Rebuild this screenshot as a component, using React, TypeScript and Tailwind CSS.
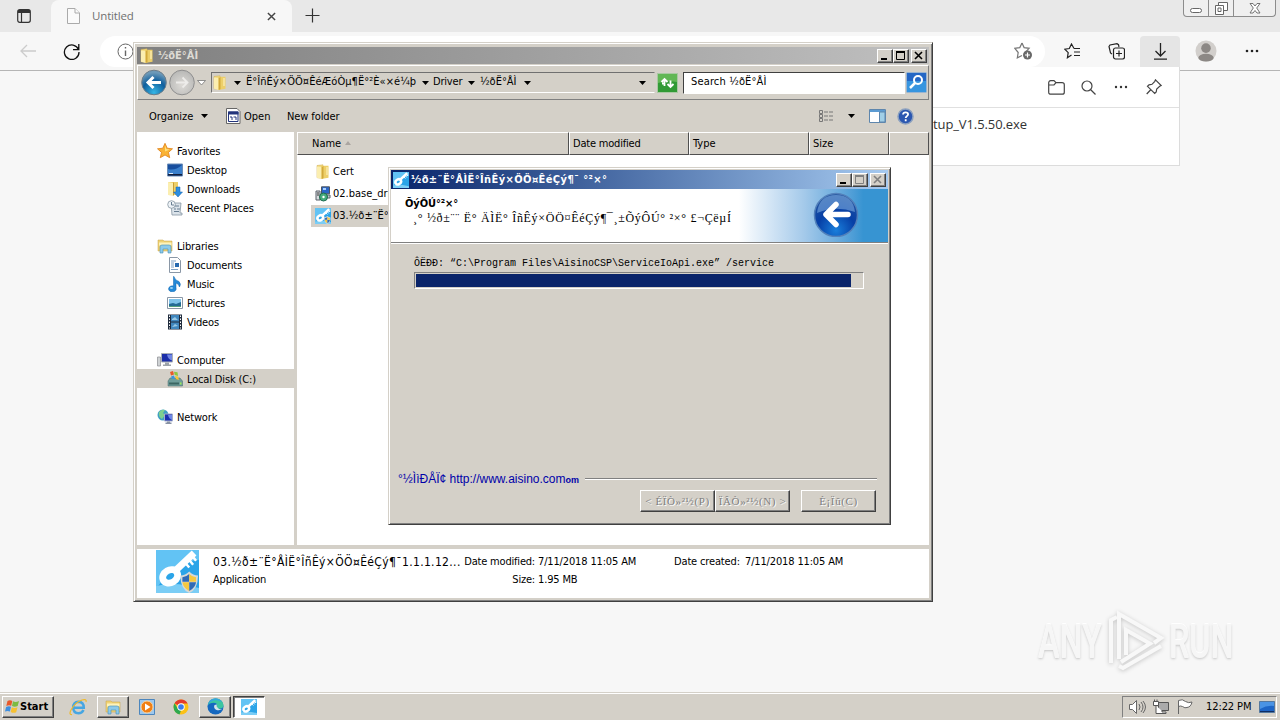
import type { ReactNode } from 'react'
import clsx from 'clsx'

const raised =
  'border border-t-white border-l-white border-r-[#404040] border-b-[#404040] shadow-[inset_-1px_-1px_0_#808080] bg-[#d4d0c8]'
const windowFrame =
  'border border-t-[#d4d0c8] border-l-[#d4d0c8] border-r-[#404040] border-b-[#404040] shadow-[inset_1px_1px_0_#fff,inset_-1px_-1px_0_#808080] bg-[#d4d0c8]'

function FolderIcon({ size = 16 }: { size?: number }) {
  return (
    <svg width={size} height={size} viewBox="0 0 16 16" className="shrink-0">
      <path d="M2 1.5 8 .8v13.8L2 13.6z" fill="#f4dc83" stroke="#cda94a" strokeWidth=".5" />
      <path d="M6 1.8h7.5v12L6 15z" fill="#edcf69" />
      <path d="M2 2.5 6.6 3.2v11.9L2 13.8z" fill="#fbeeb0" />
      <path d="M6.6 3.2 8.5 2v12l-1.9 1.1z" fill="#d2a93b" />
      <path d="M11.5 3h1v8h-1z" fill="#fff6c9" />
    </svg>
  )
}

function KeyIcon({ size = 16, shield = false }: { size?: number; shield?: boolean }) {
  return (
    <svg width={size} height={size} viewBox="0 0 44 44" className="shrink-0">
      <rect width="44" height="44" rx="2" fill="#2ba4e8" />
      <path d="M0 0h44v10C28 12 12 22 0 40z" fill="#62c3f4" />
      <path d="M0 44v-7c15-4 29-2 44 2v5z" fill="#7bcdf5" />
      <ellipse cx="14.500" cy="27" rx="8" ry="6.500" fill="none" stroke="#fff" strokeWidth="7" transform="rotate(-30 14.500 27)" />
      <path d="M20 21 39 3" stroke="#fff" strokeWidth="7" />
      <path d="m29 12 5 6M33 9l5 6M37 6l4 5" stroke="#fff" strokeWidth="2.500" />
      {shield && (
        <g>
          <path d="M25 26q5 0 9-4 4 4 9 4 0 14-9 18-9-4-9-18z" fill="#d5d8d8" />
          <path d="M27 28q4-.5 7-3.500v8h-7z" fill="#306ab6" />
          <path d="M34 24.500q3 3 7 3.500v4.500h-7z" fill="#f5c83f" />
          <path d="M27 33h7v9q-6-3-7-9z" fill="#f5c83f" />
          <path d="M34 33h7q-1 6-7 9z" fill="#306ab6" />
        </g>
      )}
    </svg>
  )
}

function StarIcon() {
  return (
    <svg width="16" height="16" viewBox="0 0 16 16">
      <path d="m8 .3 2.200 4.900 5.300.6-4 3.600 1.200 5.300L8 12l-4.700 2.700 1.200-5.300-4-3.600 5.300-.6z" fill="#f9b233" stroke="#e07f16" strokeWidth=".8" />
      <path d="m8 2.500 1.300 3.500 3.500.4-4.800 2z" fill="#ffe07c" />
    </svg>
  )
}

function DesktopIcon() {
  return (
    <svg width="16" height="16" viewBox="0 0 16 16">
      <path d="M.5 2h15v12H.5z" fill="#174e9e" stroke="#6c8db7" />
      <path d="M1 12V7q7 2 14-4v9z" fill="#3b80cc" />
      <path d="M1 12h14v1.500H1z" fill="#111f3e" />
      <path d="M2 11h4v1H2z" fill="#d9ebff" />
    </svg>
  )
}

function DownloadsIcon() {
  return (
    <svg width="16" height="16" viewBox="0 0 16 16">
      <path d="M1 1h10v13H1z" fill="#edcf69" />
      <path d="m1 1 5 1v13l-5-1z" fill="#fbeeb0" />
      <path d="M6 2 7 1v13l-1 1z" fill="#c99d32" />
      <path d="M9 6h4v5h2.500L11 16l-4.500-5H9z" fill="#2d8ee0" stroke="#1561ad" strokeWidth=".5" />
    </svg>
  )
}

function RecentIcon() {
  return (
    <svg width="16" height="16" viewBox="0 0 16 16">
      <path d="M4 3h10l-1 10h2v2H5z" fill="#dbe3ea" stroke="#8795a2" strokeWidth=".8" />
      <circle cx="4.500" cy="4.500" r="3.800" fill="#eef3f7" stroke="#8795a2" strokeWidth=".8" />
      <path d="M4.500 2v3H7M8 6h4M7 9h2m1 0h3M7 11.500h5" fill="none" stroke="#687e92" />
    </svg>
  )
}

function LibrariesIcon() {
  return (
    <svg width="17" height="16" viewBox="0 0 17 16">
      <path d="M1 2h5l1 1h8v10H1z" fill="#f0d274" stroke="#c7a146" strokeWidth=".5" />
      <path d="M2 4.500h12.500v3H2z" fill="#fdf3bb" />
      <path d="M3 15V9q0-2 2-2h7q2 0 2 2v6h-3v-4H6v4z" fill="#8ccaea" stroke="#478fb6" strokeWidth=".6" />
    </svg>
  )
}

function DocumentsIcon() {
  return (
    <svg width="16" height="16" viewBox="0 0 16 16">
      <path d="M2.500.5h8l3 3v12h-11z" fill="#fff" stroke="#8a97a6" />
      <path d="M4 4h5M4 6h3M4 8h3M4 10h3M4 12.500h7" stroke="#7fa2c6" />
      <path d="M8 6h4v4H8z" fill="#276ab0" />
    </svg>
  )
}

function MusicIcon() {
  return (
    <svg width="16" height="16" viewBox="0 0 16 16">
      <path d="M7 .5q1 4 5 5 2.500 2.500.5 5.500-.5-3-3.500-4v5A3.800 3 0 1 1 6.500 10V.5z" fill="#2389d8" stroke="#0f63ad" strokeWidth=".5" />
      <ellipse cx="4.500" cy="12" rx="1.500" ry="1" fill="#96d2f6" />
    </svg>
  )
}

function PicturesIcon() {
  return (
    <svg width="16" height="16" viewBox="0 0 16 16">
      <path d="M.5 2.500h15v11H.5z" fill="#fff" stroke="#8a97a6" />
      <path d="M2 4h12v8H2z" fill="#7fc3ea" />
      <path d="m2 9 4-1 3 1 5-2v5H2z" fill="#246b94" />
      <path d="M2 11h12v1H2z" fill="#54a07c" />
    </svg>
  )
}

function VideosIcon() {
  return (
    <svg width="16" height="16" viewBox="0 0 16 16">
      <path d="M1 .5h14v15H1z" fill="#1f2b3c" />
      <path d="M4 1h8v6.500H4zM4 8.500h8V15H4z" fill="#4087be" />
      <path d="m5 5 3-2 3 3H5zM5 13l3-3 3 2z" fill="#99c9e5" />
      <path d="M2.500 1.500v13M13.500 1.500v13" stroke="#fff" strokeDasharray="1.500 1.500" />
    </svg>
  )
}

function ComputerIcon() {
  return (
    <svg width="17" height="16" viewBox="0 0 17 16">
      <path d="M.5 5h3v9h-3z" fill="#cfd2d4" stroke="#8a8d90" strokeWidth=".7" />
      <path d="M4.500 1.500h11V10h-11z" fill="#1b2ea8" stroke="#a9afb5" />
      <path d="M10 2.500h5v6q-4-1-5-6z" fill="#7187e5" />
      <path d="M8 10.500h4v2h2V14H6v-1.500h2z" fill="#9ca3a9" />
    </svg>
  )
}

function DiskIcon() {
  return (
    <svg width="16" height="16" viewBox="0 0 16 16">
      <path d="m1 10 2-3h10l2.500 3v5H1z" fill="#6f9d9a" stroke="#476b69" strokeWidth=".5" />
      <path d="M2 11.500h10v2H2z" fill="#3c6663" />
      <path d="M13 11.500h1.500v2H13z" fill="#9aee57" />
      <path d="m3 1 3-1 1 3.500-3 1z" fill="#e8592b" />
      <path d="m7 .8 3.500.5L11 5 7.700 4z" fill="#8cc63e" />
      <path d="m4 5.500 3-1 1 3.500H5z" fill="#3a94dc" />
      <path d="m8 5 3 .5 1 3.500-3-1z" fill="#f9c52f" />
    </svg>
  )
}

function NetworkIcon() {
  return (
    <svg width="17" height="16" viewBox="0 0 17 16">
      <circle cx="6" cy="6" r="5.500" fill="#3e9fc4" />
      <path d="M2 3q3-3 6-2L6 4l2 2-3 4Q1 8 2 3z" fill="#7ed08f" />
      <path d="M7.500 5h8v7h-8z" fill="#1a2fb0" stroke="#a3adc9" />
      <path d="M11 6h4v5q-3-1-4-5z" fill="#6e88e8" />
      <path d="M10 12.500h3v1h1.500V15h-6v-1.500H10z" fill="#8892a3" />
    </svg>
  )
}

function InstallerIcon() {
  return (
    <svg width="16" height="16" viewBox="0 0 16 16">
      <path d="M6.500.8h8v7h-8z" fill="#2a66c8" stroke="#4c5661" />
      <path d="M8 2h3v2H8z" fill="#a7d0ff" />
      <path d="M1 5h4v9H1z" fill="#d8dbde" stroke="#59616a" />
      <path d="M2 7h2M2 9h2" stroke="#333" />
      <path d="M12 9h3v3h-3z" fill="#c3c8cd" stroke="#59616a" />
      <circle cx="8.500" cy="11" r="4" fill="#46ad7d" stroke="#1f6b50" />
      <circle cx="8.500" cy="11" r="1.200" fill="#fff" />
    </svg>
  )
}

function EdgeIcon({ size = 18 }: { size?: number }) {
  return (
    <svg width={size} height={size} viewBox="0 0 18 18">
      <circle cx="9" cy="9" r="8.500" fill="#1568bf" />
      <path d="M.7 8Q2 .5 9 .5q8 .5 8.500 7 0 4-4.500 4-3 0-2.500-2Q11.500 5 7 5 2.500 5 .7 8z" fill="#3cc6a0" />
      <path d="M.7 8Q2 .5 9 .5q5 0 7 4Q10 1 5 3.500 2 5 .7 8z" fill="#36a8dc" />
      <path d="M8 7.500q-1.500 3 1.500 5 4 1.500 7-1-3 1-5-1-2-1.500-1-3.500z" fill="#d4e4ea" />
    </svg>
  )
}

function ChromeIcon() {
  return (
    <svg width="16" height="16" viewBox="0 0 16 16">
      <circle cx="8" cy="8" r="7.500" fill="#fbc116" />
      <path d="M8 8 1.500 4.200Q4 .5 8 .5q4.500 0 6.700 4H8z" fill="#e33b2e" />
      <path d="M1.500 4.200 5 10l3 1.500-1.500 3.900Q1 14.300.5 8q0-2 1-3.800z" fill="#2da94f" />
      <circle cx="8" cy="8" r="3.700" fill="#fff" />
      <circle cx="8" cy="8" r="2.800" fill="#3b7ded" />
    </svg>
  )
}

function IeIcon() {
  return (
    <svg width="19" height="18" viewBox="0 0 19 18">
      <path d="M14.500 12q-1.500 3.300-5 3.300-5.300-.3-5.300-5.800t5.300-5.800q5.300.3 5.300 6H5.500" fill="none" stroke="#46a6e2" strokeWidth="2.500" />
      <path d="M3 16.500Q-.5 17 2 12 6 4.500 13 2q5-1.500 4 2" fill="none" stroke="#f0b929" strokeWidth="1.200" />
    </svg>
  )
}

function MediaIcon() {
  return (
    <svg width="16" height="16" viewBox="0 0 16 16">
      <path d="M.5.5h15v15H.5z" fill="#9dc8ee" stroke="#4c86bd" />
      <circle cx="8" cy="8" r="6" fill="#f07f14" stroke="#fbd29b" />
      <path d="m6 4.500 5.500 3.500L6 11.500z" fill="#fff" />
    </svg>
  )
}

function WindowsFlag() {
  return (
    <svg width="15" height="15" viewBox="0 0 15 15">
      <path d="M2.500 2Q5 .5 7.300 2L6.200 6.800Q4 5.500 1.300 7z" fill="#e8592b" />
      <path d="M8 2.300q2.500 1.500 6-.3l-1.300 5q-3 1.500-5.700 0z" fill="#7dbb42" />
      <path d="M1.100 8Q4 6.500 6 7.800L4.900 12.500Q2.500 11.500 0 12.600z" fill="#3e8fe0" />
      <path d="M6.800 8.200q2.500 1.300 5.700.1l-1.300 4.900q-2.700 1.300-5.500-.3z" fill="#f7c131" />
    </svg>
  )
}

function Arrow({ className }: { className?: string }) {
  return (
    <svg width="7" height="4" viewBox="0 0 7 4" className={clsx('shrink-0', className)}>
      <path d="M0 0h7L3.500 4z" fill="#000" />
    </svg>
  )
}

function CaptionButton({ kind, disabled }: { kind: 'min' | 'max' | 'close'; disabled?: boolean }) {
  const color = disabled ? '#808080' : '#000'
  return (
    <div className={clsx('flex h-[14px] w-4 items-center justify-center', raised, kind === 'close' && 'ml-[2px]')}>
      <svg width="12" height="10" viewBox="0 0 12 10" fill="none" stroke={color}>
        {kind === 'min' && <path d="M2 8h6" stroke="#000" strokeWidth="2" />}
        {kind === 'max' && (
          <>
            <path d="M1.500 1v7.500h8V1" />
            <path d="M1 1h9" strokeWidth="2" />
          </>
        )}
        {kind === 'close' && <path d="m2 1 7 7M9 1 2 8" strokeWidth="1.600" />}
      </svg>
    </div>
  )
}

function ToolCell({ children, active }: { children: ReactNode; active?: boolean }) {
  return (
    <div className={clsx('flex h-[31px] w-10 shrink-0 items-center justify-center', active && 'rounded-t bg-[#e5e5e5]')}>
      {children}
    </div>
  )
}

function Browser() {
  return (
    <div className="flex flex-1 flex-col bg-[#f7f7f7]">
      <div className="flex h-[32px] bg-[#e8e8e8]">
        <div className="flex w-[51px] items-center justify-center pr-[3px]">
          <svg width="14" height="14" viewBox="0 0 14 14" fill="none" stroke="#333" strokeWidth="1.200">
            <rect x=".7" y=".7" width="12.600" height="12.600" rx="2" />
            <path d="M1 2.500h12" strokeWidth="3" />
            <path d="M4.500 3v10" />
          </svg>
        </div>
        <div className="flex w-[241px] items-center rounded-t-lg bg-[#f7f7f7] pr-[16px] pl-4">
          <svg width="13" height="16" viewBox="0 0 13 16" fill="#fafafa" stroke="#aaa">
            <path d="M.5.500h7.500l4.500 4.500v10.500H.5z" />
            <path d="M8 .5V5h4.500" />
          </svg>
          <span className="ml-3 font-['Open_Sans',sans-serif] text-[11.500px] tracking-[-0.15px] text-[#717171]">Untitled</span>
          <svg width="9" height="9" viewBox="0 0 10 10" stroke="#444" strokeWidth="1.600" className="ml-auto">
            <path d="m1 1 8 8M9 1 1 9" />
          </svg>
        </div>
        <svg width="15" height="15" viewBox="0 0 15 15" stroke="#333" strokeWidth="1.200" className="mt-2 ml-[13px]">
          <path d="M7.500.5v14M.5 7.500h14" />
        </svg>
        <div className="mr-[4px] ml-auto flex h-[17px] w-[93px] rounded-b border border-t-0 border-[#8c8c8c] bg-[#efefef]">
          <div className="flex w-[25px] justify-center border-r border-[#8c8c8c] pt-2">
            <div className="h-[5px] w-3 rounded-sm border border-[#666] bg-white" />
          </div>
          <div className="flex w-[25px] justify-center border-r border-[#8c8c8c] pt-[2px]">
            <svg width="13" height="13" viewBox="0 0 13 13" fill="#fff" stroke="#666">
              <path d="M3.500.5h9v8h-9z" />
              <path d="M.5 3.500h8v9h-8zM3 6h3v3.500H3z" />
            </svg>
          </div>
          <div className="flex flex-1 justify-center pt-[3px]">
            <svg width="12" height="11" viewBox="0 0 12 11" fill="#fff" stroke="#666" strokeWidth=".9">
              <path d="M1 .5h3l2 2.500 2-2.500h3L7.700 5l3.300 5H8L6 7.500 4 10H1l3.300-5z" />
            </svg>
          </div>
        </div>
      </div>
      <div className="flex h-[39px] items-center border-b border-[#b5b5b5]">
        <svg width="17" height="14" viewBox="0 0 17 14" fill="none" stroke="#ccc" strokeWidth="1.300" className="ml-5">
          <path d="M16 7H1M7 1 1 7l6 6" />
        </svg>
        <svg width="17" height="17" viewBox="0 0 17 17" fill="none" stroke="#111" strokeWidth="1.300" className="ml-[26px]">
          <path d="M15.500 6.500A7.300 7.300 0 1 0 16 9M15.800 1v5.700H10" />
        </svg>
        <div className="mr-[7px] ml-[20px] flex h-[31px] flex-1 items-center justify-between rounded-full bg-white pr-3 pl-[17px]">
          <svg width="17" height="17" viewBox="0 0 17 17" fill="none" stroke="#666">
            <circle cx="8.500" cy="8.500" r="7.500" />
            <path d="M8.500 7.500V13M8.500 4v1.500" strokeWidth="1.400" />
          </svg>
          <svg width="19" height="18" viewBox="0 0 19 18" fill="none" stroke="#767676" strokeWidth="1.200">
            <path d="m8 1 2.100 4.600 5 .7-3.300 3.500M8 13.500l-4.700 2.400.9-5.400L.8 6.300l5-.7L8 1" />
            <circle cx="13.500" cy="13" r="4.500" fill="#686868" stroke="none" />
            <path d="M13.500 10.500v5M11 13h5" stroke="#fff" />
          </svg>
        </div>
        <div className="flex gap-1 pr-2">
          <ToolCell>
            <svg width="17" height="16" viewBox="0 0 17 16" fill="none" stroke="#222" strokeWidth="1.200">
              <path d="M10 5.500 7.500 1 5.300 5.500.8 6.200l3.400 3.500-.8 5L7.500 12M10 5.500h6M10 9h6M10 12.500h6" />
            </svg>
          </ToolCell>
          <ToolCell>
            <svg width="17" height="17" viewBox="0 0 17 17" fill="none" stroke="#222" strokeWidth="1.200">
              <path d="M4 11 2.500 10 1 3.500 2 2l7-1.300 1.500 1L11 4" />
              <rect x="5.500" y="5" width="11" height="11" rx="2" />
              <path d="M11 7.500v6M8 10.500h6" />
            </svg>
          </ToolCell>
          <ToolCell active>
            <svg width="13" height="17" viewBox="0 0 13 17" fill="none" stroke="#222" strokeWidth="1.300">
              <path d="M6.500 0v12.500M1.500 8l5 5 5-5M0 16.200h13" />
            </svg>
          </ToolCell>
          <div className="ml-[2px] flex gap-[6px]">
            <ToolCell>
              <svg width="22" height="22" viewBox="0 0 23 23">
                <circle cx="11.500" cy="11.500" r="11" fill="#d2cfcc" />
                <circle cx="11.500" cy="8.500" r="5" fill="#8c8885" />
                <ellipse cx="11.500" cy="18.500" rx="8" ry="4" fill="#8c8885" />
              </svg>
            </ToolCell>
            <ToolCell>
              <svg width="14" height="4" viewBox="0 0 14 4" fill="#222">
                <circle cx="2" cy="2" r="1.300" />
                <circle cx="7" cy="2" r="1.300" />
                <circle cx="12" cy="2" r="1.300" />
              </svg>
            </ToolCell>
          </div>
        </div>
      </div>
    </div>
  )
}

function DownloadsFlyout() {
  return (
    <div className="absolute top-[67px] left-[800px] h-[99px] w-[380px] border border-t-0 border-[#dcdcdc] bg-white">
      <div className="flex h-[41px] items-center justify-end gap-4 border-b border-[#e0e0e0] pr-[17px]">
        <svg width="17" height="15" viewBox="0 0 17 15" fill="none" stroke="#444" strokeWidth="1.200">
          <path d="M.7 3q0-2.300 2-2.300H6l2 2h6q2.300 0 2.300 2v7.500q0 2-2 2H3q-2.300 0-2.300-2zM.7 5H6l2-2.300" />
        </svg>
        <svg width="15" height="15" viewBox="0 0 15 15" fill="none" stroke="#444" strokeWidth="1.200">
          <circle cx="6" cy="6" r="5" />
          <path d="m9.500 9.500 5 5" />
        </svg>
        <svg width="14" height="4" viewBox="0 0 14 4" fill="#333" className="mx-[2px]">
          <circle cx="2" cy="2" r="1.200" />
          <circle cx="7" cy="2" r="1.200" />
          <circle cx="12" cy="2" r="1.200" />
        </svg>
        <svg width="16" height="16" viewBox="0 0 16 16" fill="none" stroke="#444" strokeWidth="1.200">
          <path d="m9.500.8 5.700 5.700-1.500.7-3 2.800-.5 3-1.500 1.500L1.500 7.300 3 5.800l3-.5 2.800-3zM4.500 11 .7 15" />
        </svg>
      </div>
      <div className="pt-[7px] pl-[132px] font-['Open_Sans',sans-serif] text-[13px] leading-[18px] tracking-[-0.1px] text-[#333]">tup_V1.5.50.exe</div>
    </div>
  )
}

const sidebarItems: { label: string; icon?: ReactNode; root?: boolean; selected?: boolean }[] = [
  { label: 'Favorites', icon: <StarIcon />, root: true },
  { label: 'Desktop', icon: <DesktopIcon /> },
  { label: 'Downloads', icon: <DownloadsIcon /> },
  { label: 'Recent Places', icon: <RecentIcon /> },
  { label: '' },
  { label: 'Libraries', icon: <LibrariesIcon />, root: true },
  { label: 'Documents', icon: <DocumentsIcon /> },
  { label: 'Music', icon: <MusicIcon /> },
  { label: 'Pictures', icon: <PicturesIcon /> },
  { label: 'Videos', icon: <VideosIcon /> },
  { label: '' },
  { label: 'Computer', icon: <ComputerIcon />, root: true },
  { label: 'Local Disk (C:)', icon: <DiskIcon />, selected: true },
  { label: '' },
  { label: 'Network', icon: <NetworkIcon />, root: true }
]

const files = [
  { name: 'Cert', icon: <FolderIcon /> },
  { name: '02.base_driver', icon: <InstallerIcon /> },
  { name: '03.½ð±¨Ë°ÅÌË°ÎñÊý', icon: <KeyIcon shield />, selected: true }
]

function HeaderCell({ children, className }: { children?: ReactNode; className: string }) {
  return (
    <div
      className={clsx(
        'flex h-[23px] items-center border-t border-r border-b border-l border-t-white border-r-[#505050] border-b-[#505050] border-l-white pt-[2px]',
        className
      )}
    >
      {children}
    </div>
  )
}

function ExplorerWindow() {
  return (
    <div className={clsx('absolute top-[42px] left-[133px] flex h-[560px] w-[800px] flex-col p-[3px] pt-[4px]', windowFrame)}>
      <div className="flex h-[17px] shrink-0 items-center bg-linear-to-r from-[#808080] to-[#c0c0c0] pr-[2px] pl-[2px]">
        <FolderIcon />
        <span className="ml-[3px] pt-px text-[11px] font-bold text-[#dedbd5]">½ðË°ÅÌ</span>
        <div className="ml-auto flex">
          <CaptionButton kind="min" />
          <CaptionButton kind="max" />
          <CaptionButton kind="close" />
        </div>
      </div>

      <div className="mt-px flex h-[35px] shrink-0 items-center border border-t-white border-r-[#808080] border-b-[#808080] border-l-white pl-[3px]">
        <svg width="65" height="27" viewBox="0 0 65 27" className="shrink-0">
          <defs>
            <radialGradient id="nav" cx=".5" cy=".9" r=".8">
              <stop offset="0" stopColor="#35b5e5" />
              <stop offset=".6" stopColor="#0f5f9d" />
              <stop offset="1" stopColor="#6c99b8" />
            </radialGradient>
            <radialGradient id="navOff" cx=".5" cy=".6" r=".6">
              <stop offset="0" stopColor="#dddbd7" />
              <stop offset="1" stopColor="#b8b8b6" />
            </radialGradient>
          </defs>
          <circle cx="13" cy="13.500" r="12.300" fill="url(#nav)" stroke="#6e7d88" />
          <path d="M20 13.500H8M12.500 8 7 13.500l5.500 5.500" fill="none" stroke="#fff" strokeWidth="3" />
          <circle cx="41" cy="13.500" r="12.300" fill="url(#navOff)" stroke="#8f8f8f" />
          <path d="M35 13.500h11M41.500 8.500l5 5-5 5" fill="none" stroke="#edecea" strokeWidth="1.800" />
          <path d="M56.500 11.500h8l-4 4.500z" fill="#fff" stroke="#777" strokeWidth=".8" />
        </svg>
        <div className="ml-[5px] flex h-[21px] w-[444px] shrink-0 items-center border border-t-[#707070] border-r-[#d4d0c8] border-b-white border-l-[#707070]">
          <FolderIcon />
          <Arrow className="ml-[6px]" />
          <span className="ml-[5px] w-[173px] shrink-0 text-[11px] tracking-[0.05px] whitespace-nowrap">Ë°ÎñÊý×ÖÖ¤ÊéÆóÒµ¶Ë°²È«×é¼þ</span>
          <Arrow className="ml-[3px]" />
          <span className="ml-1 w-[31px] text-[11px] tracking-[-0.2px]">Driver</span>
          <Arrow className="ml-[4px]" />
          <span className="ml-[5px] w-[40px] text-[11px]">½ðË°ÅÌ</span>
          <Arrow className="ml-[4px]" />
          <Arrow className="mr-[8px] ml-auto" />
        </div>
        <svg width="21" height="20" viewBox="0 0 21 20" className="ml-[2px] shrink-0">
          <rect x=".5" y=".5" width="20" height="19" fill="#319a35" stroke="#a9c8a3" />
          <path d="M1 1h19v8Q10 7 1 10z" fill="#62b755" />
          <path d="M7.500 13V6M4.500 9l3-3 3 3M5 10.500h2.500M13.500 7.500V14M10.500 11l3 3 3-3" fill="none" stroke="#fff" strokeWidth="1.800" />
        </svg>
        <div className="ml-[5px] flex h-[22px] w-[222px] items-center border border-t-[#404040] border-r-white border-b-white border-l-[#404040] bg-white pl-[7px] text-[11px] tracking-[0.15px]">
          Search ½ðË°ÅÌ
        </div>
        <svg width="21" height="21" viewBox="0 0 21 21" className="ml-px shrink-0">
          <rect x=".5" y=".5" width="20" height="20" rx="1" fill="#3795df" stroke="#9ab4d1" />
          <path d="M1 1h19v8H1z" fill="#2567c5" />
          <circle cx="12" cy="8" r="4" fill="none" stroke="#fff" strokeWidth="2" />
          <path d="m9 11-5 5" stroke="#fff" strokeWidth="2.500" />
        </svg>
      </div>

      <div className="flex h-[32px] shrink-0 items-center pl-[12px] text-[11px]">
        <span className="w-[44px] pt-[2px]">Organize</span>
        <Arrow className="ml-[8px]" />
        <svg width="15" height="16" viewBox="0 0 15 16" className="ml-[18px]">
          <path d="M.5.5h10.500L14 3.500v12H.5z" fill="#fff" stroke="#666" />
          <path d="M2.500 4h9.500v9.500H2.500z" fill="#fff" stroke="#23347c" />
          <path d="M2 3.500h10.500v3H2z" fill="#23347c" />
          <path d="M4 9h2v3M7.500 9h2.500v3" stroke="#23347c" fill="none" />
        </svg>
        <span className="ml-[3px] w-[27px] pt-[2px]">Open</span>
        <span className="ml-4 pt-[2px] tracking-[-0.1px]">New folder</span>
        <svg width="15" height="12" viewBox="0 0 15 12" className="mr-[14px] ml-auto" fill="none" stroke="#777">
          <path d="M.5.500h3v3h-3zM.5 4.500h3v3h-3zM.5 8.500h3v3h-3z" />
          <path d="M5 2h10M5 6h10M5 10h10" strokeDasharray="4 1" />
        </svg>
        <Arrow />
        <svg width="17" height="14" viewBox="0 0 17 14" className="ml-[14px]">
          <path d="M.5.5h16v13H.5z" fill="#fff" stroke="#5e86ad" />
          <path d="M1 1h15v2H1z" fill="#5c9bd2" />
          <path d="M10.500 3h5.500v10h-5.500z" fill="#a1cfe7" stroke="#5e86ad" />
        </svg>
        <svg width="17" height="17" viewBox="0 0 17 17" className="mr-[15px] ml-[11px]">
          <circle cx="8.500" cy="8.500" r="7.500" fill="#2b57b0" stroke="#8ba0bf" strokeWidth="1.500" />
          <path d="M6 6.500q.2-2.200 2.600-2.200t2.500 2c0 1.800-2.400 1.800-2.400 3.700M8.700 11.300v2" fill="none" stroke="#fff" strokeWidth="1.800" />
        </svg>
      </div>

      <div className="flex h-[413px] shrink-0">
        <div className="w-[157px] shrink-0 bg-white pt-[9px]">
          {sidebarItems.map((item, i) => (
            <div
              key={i}
              className={clsx(
                'flex h-[19px] items-center text-[11px] tracking-[-0.15px]',
                item.root ? 'pl-[20px]' : 'pl-[30px]',
                item.selected && 'bg-[#d4d0c8]'
              )}
            >
              {item.icon && <span className="mr-1 w-4 shrink-0">{item.icon}</span>}
              <span className="pt-[3px]">{item.label}</span>
            </div>
          ))}
        </div>
        <div className="w-[3px] shrink-0 bg-[#d4d0c8]" />
        <div className="flex-1 bg-white">
          <div className="flex bg-[#d4d0c8] text-[11px]">
            <HeaderCell className="w-[272px] shrink-0 pl-[14px]">
              Name
              <svg width="6" height="4" viewBox="0 0 6 4" className="mb-1 ml-[4px]">
                <path d="M0 4h6L3 0z" fill="#aaa5a0" />
              </svg>
            </HeaderCell>
            <HeaderCell className="w-[120px] shrink-0 pl-[3px] tracking-[-0.2px]">Date modified</HeaderCell>
            <HeaderCell className="w-[120px] shrink-0 pl-[3px]">Type</HeaderCell>
            <HeaderCell className="w-[80px] shrink-0 pl-[3px]">Size</HeaderCell>
            <HeaderCell className="flex-1" />
          </div>
          <div className="w-[230px] pt-[6px] pl-[14px]">
            {files.map(file => (
              <div
                key={file.name}
                className={clsx('flex h-[22px] items-center pl-1 text-[11px] whitespace-nowrap', file.selected && 'bg-[#d4d0c8]')}
              >
                {file.icon}
                <span className="ml-[2px] pt-px">{file.name}</span>
              </div>
            ))}
          </div>
        </div>
      </div>

      <div className="mt-[4px] flex flex-1 bg-white pt-px pl-[19px] text-[11px]">
        <KeyIcon size={43} shield />
        <div className="ml-[14px] w-[251px] shrink-0 pt-[3px] leading-[18px] whitespace-nowrap">
          <div className="text-[12px] tracking-[0.35px]">03.½ð±¨Ë°ÅÌË°ÎñÊý×ÖÖ¤ÊéÇý¶¯1.1.1.12...</div>
          <div className="tracking-[-0.2px]">Application</div>
        </div>
        <div className="w-[71px] shrink-0 pt-[3px] text-right leading-[18px] tracking-[-0.2px] whitespace-nowrap">
          <div>Date modified:</div>
          <div>Size:</div>
        </div>
        <div className="ml-[3px] w-[136px] shrink-0 pt-[3px] leading-[18px] tracking-[-0.15px] whitespace-nowrap">
          <div>7/11/2018 11:05 AM</div>
          <div>1.95 MB</div>
        </div>
        <div className="w-[68px] shrink-0 pt-[3px] leading-[18px] tracking-[-0.15px] whitespace-nowrap">Date created:</div>
        <div className="ml-[3px] pt-[3px] leading-[18px] tracking-[-0.15px] whitespace-nowrap">7/11/2018 11:05 AM</div>
      </div>
    </div>
  )
}

function WizardButton({ children, className }: { children: ReactNode; className?: string }) {
  return (
    <button
      disabled
      className={clsx(
        "flex h-[22px] w-[75px] items-center justify-center font-['Liberation_Serif',serif] text-[11px] tracking-[0.6px] whitespace-nowrap text-[#808080] [text-shadow:1px_1px_0_#fff]",
        raised,
        className
      )}
    >
      {children}
    </button>
  )
}

function InstallerDialog() {
  return (
    <div className={clsx('absolute top-[167px] left-[388px] flex h-[358px] w-[503px] flex-col p-[2px]', windowFrame)}>
      <div className="flex h-[19px] shrink-0 items-center bg-linear-to-r from-[#0a246a] to-[#a6caf0] pr-[2px] pl-[2px]">
        <KeyIcon />
        <span className="ml-[2px] pt-px text-[11px] font-bold tracking-[0.4px] whitespace-nowrap text-white">½ð±¨Ë°ÅÌË°ÎñÊý×ÖÖ¤ÊéÇý¶¯ °²×°</span>
        <div className="ml-auto flex">
          <CaptionButton kind="min" />
          <CaptionButton kind="max" disabled />
          <CaptionButton kind="close" disabled />
        </div>
      </div>
      <div className="flex h-[54px] shrink-0 items-start border-b border-[#808080] bg-linear-to-r from-white from-[70%] via-[#a5caea] via-[83%] to-[#3794d2] to-[95%] pr-[29px] pl-[14px]">
        <div className="pt-[7px] whitespace-nowrap">
          <div className="text-[11px] leading-[15px] font-bold tracking-[-0.1px]">ÕýÔÚ°²×°</div>
          <div className="pl-2 font-['Liberation_Serif',serif] text-[12px] leading-[15px] tracking-[0.7px]">
            ¸° ½ð±¨¨ Ë° ÄÌË° ÎñÊý×ÖÖ¤ÊéÇý¶¯¸±ÕýÔÚ° ²×° £¬ÇëµÍ
          </div>
        </div>
        <svg width="46" height="46" viewBox="0 0 46 46" className="mt-[2px] ml-auto shrink-0">
          <defs>
            <radialGradient id="orb" cx=".5" cy=".85" r=".8">
              <stop offset="0" stopColor="#197edb" />
              <stop offset=".55" stopColor="#063fa6" />
              <stop offset="1" stopColor="#23539f" />
            </radialGradient>
          </defs>
          <circle cx="23" cy="24" r="21.500" fill="url(#orb)" stroke="#5280ba" strokeWidth="1.500" />
          <path d="M4 22Q6 4 23 4t19 17Q22 14 4 22z" fill="#84b3e5" opacity=".55" />
          <path d="M35 23.500H13M23 13.500l-10 10 10 10" fill="none" stroke="#fff" strokeWidth="5.500" strokeLinecap="round" strokeLinejoin="round" />
        </svg>
      </div>
      <div className="flex flex-1 flex-col border-t border-white pr-[11px] pl-[7px]">
        <div className="mt-3 pl-4 font-['Liberation_Mono',monospace] text-[10px] leading-[15px] whitespace-pre">
          {'ÔËÐÐ: “C:\\Program Files\\AisinoCSP\\ServiceIoApi.exe” /service'}
        </div>
        <div className="mt-px ml-4 h-[17px] w-[450px] border border-t-[#808080] border-r-white border-b-white border-l-[#808080] p-px">
          <div className="h-full w-[435px] bg-[#0a246a]" />
        </div>
        <div className="mt-auto flex h-5 items-center">
          <div className="font-['Liberation_Sans',sans-serif] text-[12px] whitespace-nowrap text-[#0000a8]">
            °½ÌìÐÅÏ¢ http://www.aisino.com<span className="text-[9px] font-bold">om</span>
          </div>
          <div className="ml-[6px] h-[2px] flex-1 border-t border-b border-t-[#808080] border-b-white" />
        </div>
        <div className="mt-px mb-[10px] flex justify-end pr-px">
          <WizardButton>&lt; ÉÏÒ»²½(P)</WizardButton>
          <WizardButton>ÏÂÒ»²½(N) &gt;</WizardButton>
          <WizardButton className="ml-[11px]">È¡Ïû(C)</WizardButton>
        </div>
      </div>
    </div>
  )
}

function Watermark() {
  return (
    <div className="absolute top-[610px] left-[1038px] flex h-[62px] w-[195px] items-center justify-between font-['Roboto',sans-serif] text-[49px] leading-none font-medium text-[#f6f6f6] [text-shadow:0_-1px_1px_#fff,0_1px_3px_#c4c4c4]">
      <span className="w-[64px] origin-left scale-x-[.66]">ANY</span>
      <svg width="58" height="62" viewBox="0 0 58 62" fill="none" stroke="#f8f8f8" strokeWidth="4" className="drop-shadow-[0_1px_2px_#c4c4c4]">
        <path d="M10 7 4 10v43M12 49V4l42 24-7 5M19 45V20l24 13.500L14 52M54 36 16 58l-4-2" />
      </svg>
      <span className="w-[64px] origin-left scale-x-[.66]">RUN</span>
    </div>
  )
}

function TaskButton({ children, pressed }: { children: ReactNode; pressed?: boolean }) {
  return (
    <div
      className={clsx(
        'flex h-[22px] w-8 items-center justify-center',
        pressed ? 'border border-t-[#404040] border-r-white border-b-white border-l-[#404040] bg-white shadow-[inset_1px_1px_0_#808080]' : raised
      )}
    >
      {children}
    </div>
  )
}

function Taskbar() {
  return (
    <div className="flex h-[28px] shrink-0 items-center border-t border-[#d4d0c8] bg-[#d4d0c8] pr-[3px] pl-[2px] shadow-[inset_0_1px_0_#fff]">
      <div className={clsx('flex h-[22px] w-[52px] items-center pl-[2px]', raised)}>
        <WindowsFlag />
        <span className="pt-px text-[11px] font-bold">Start</span>
      </div>
      <div className="ml-[15px] flex items-center">
        <IeIcon />
        <div className="ml-[9px]">
          <TaskButton>
            <LibrariesIcon />
          </TaskButton>
        </div>
        <div className="ml-[10px]">
          <MediaIcon />
        </div>
        <div className="mr-[10px] ml-[18px]">
          <ChromeIcon />
        </div>
        <TaskButton>
          <EdgeIcon size={17} />
        </TaskButton>
        <div className="ml-[2px]">
          <TaskButton pressed>
            <KeyIcon />
          </TaskButton>
        </div>
      </div>
      <div className="ml-auto flex h-[22px] w-[155px] items-center border border-t-[#808080] border-r-white border-b-white border-l-[#808080] pl-[6px]">
        <svg width="17" height="16" viewBox="0 0 17 16" fill="#fff" stroke="#666">
          <path d="M.5 5.500h3l4-4v13l-4-4h-3z" />
          <path d="M10 5q2 3 0 6M12 3q4 5 0 10M14 2q5 6 0 12" fill="none" />
        </svg>
        <svg width="17" height="16" viewBox="0 0 17 16" fill="#fff" stroke="#555" className="ml-[7px]">
          <path d="M5.500 3.500h10v8h-10z" fill="#aaa" />
          <path d="M.5 2.500h5v4h-5zM3 6.500v8h10v-1.500H9V12M1.500.5v2M4 .5v2" />
        </svg>
        <svg width="16" height="16" viewBox="0 0 16 16" fill="#fff" stroke="#666" className="ml-[7px]">
          <path d="M1.500 15V1.500q4-2 7 1 3 2 6.500.5-1 5-5 5.500-2 1-4.500-1-2-1-4 0" />
        </svg>
        <span className="ml-[13px] w-[45px] pt-px text-[11px] tracking-[-0.1px] whitespace-nowrap">12:22 PM</span>
        <svg width="16" height="14" viewBox="0 0 16 14" className="ml-2">
          <path d="M.5 1.500h15v11H.5z" fill="#1e65c6" stroke="#54789f" />
          <path d="M1 2h14v4Q8 5 1 9z" fill="#4a93e4" />
          <path d="M1 11h14v1H1z" fill="#102d63" />
        </svg>
      </div>
    </div>
  )
}

export default function App() {
  return (
    <div className="relative flex h-[720px] w-[1280px] flex-col overflow-hidden font-['DejaVu_Sans_Condensed','Noto_Sans',sans-serif] text-black">
      <Browser />
      <DownloadsFlyout />
      <Watermark />
      <ExplorerWindow />
      <InstallerDialog />
      <Taskbar />
    </div>
  )
}
